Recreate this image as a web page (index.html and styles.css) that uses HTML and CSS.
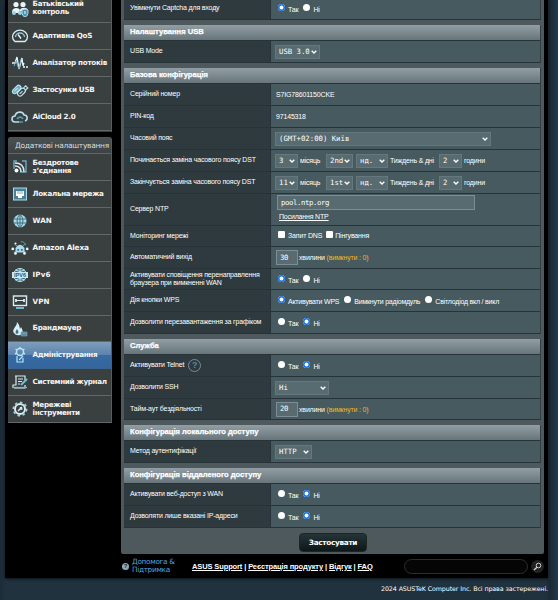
FILE: index.html
```
<!DOCTYPE html>
<html lang="uk">
<head>
<meta charset="utf-8">
<title>Адміністрування</title>
<link rel="stylesheet" href="styles.css">
</head>
<body>
<svg class="defs" width="0" height="0"><symbol id="chev" viewBox="0 0 6 4"><path d="M.7.7 3 3 5.300.7" fill="none" stroke="#fff" stroke-width="1.4"/></symbol></svg>
<div class="shell">
<div class="top">
<nav class="side">
<ul class="menu first">
<li><svg viewBox="0 0 18 16"><g fill="#e8f6fa"><circle cx="5" cy="3.500" r="2.600"/><circle cx="12" cy="3.500" r="2.600"/><path d="M1 11c0-5 7-5 8-2l-1 3H1zM9 9c1-3 7-3 8 0v1H9z"/></g><circle cx="3" cy="12" r="2" fill="#9bd3e4"/><circle cx="9" cy="12" r="2" fill="#9bd3e4"/><path d="M11 9l3-1 3 1v3q0 3-3 4-3-1-3-4z" fill="#4d8fae" stroke="#a8dced"/><path d="M14 10v3" stroke="#fff"/></svg><span>Батьківський контроль</span></li>
<li><svg viewBox="0 0 18 16" fill="none" stroke="#d8edf3" stroke-width="1.300"><path d="M4 13.500a7.500 6.500 0 1 1 10 0z"/><path d="M4.500 9a4.500 4 0 0 1 9 0" stroke="#8ecbdc"/><path d="M7 6.500l3 4" stroke="#fff"/></svg><span>Адаптивна QoS</span></li>
<li><svg viewBox="0 0 18 16" fill="none" stroke="#e8f6fa" stroke-width="1.300"><path d="M1 8h3l2-6 2 12 3-11 1 8 1-3"/><path d="M3 11l2-5 3 8 2-10" stroke="#70b9d0" stroke-width="1"/><path d="M12 12h2m1 0h2" /></svg><span>Аналізатор потоків</span></li>
<li><svg viewBox="0 0 18 16"><g transform="rotate(-45 9 8)" fill="none" stroke="#b9e4f0" stroke-width="1.200"><rect x="2" y="3" width="10" height="4.500" rx="2.200" fill="#68aac4"/><rect x="4" y="8" width="9" height="5" rx="2.500"/><path d="M13 9h3v3h-3M6 10.500h4M4 5h5"/></g></svg><span>Застосунки USB</span></li>
<li><svg viewBox="0 0 18 16" fill="none" stroke="#b9dfe9" stroke-width="1.600"><path d="M8 13H4a3 3 0 0 1 0-6c1-5 8-5 9-1 4 0 4 5 1 6"/><path d="M6 10c2-3 5-2 6 0M8 13h4" stroke="#5499b2"/></svg><span>AiCloud 2.0</span></li>
</ul>
<ul class="menu second">
<li class="title">Додаткові налаштування</li>
<li><svg viewBox="0 0 18 16" fill="none" stroke="#d8edf3" stroke-width="1.400"><path d="M3 10V2h3m5 0h4v11H9" stroke="#70aabd"/><path d="M4 4q9 0 9 9M4 7q6 0 6 6"/><circle cx="5.500" cy="11.500" r="2" fill="#fff" stroke="none"/></svg><span>Бездротове з’єднання</span></li>
<li><svg viewBox="0 0 18 16"><rect x="2.500" y="2" width="13" height="12" fill="#4a8199" stroke="#a8dced"/><path d="M5 5h8v5h-2v2H7v-2H5z" fill="#fff"/><path d="M7 5v3m2-3v3m2-3v3" stroke="#4a8199" stroke-width=".7"/></svg><span>Локальна мережа</span></li>
<li><svg viewBox="0 0 18 16"><circle cx="9" cy="8" r="6.500" fill="#a9d7e4"/><path d="M2 6h14M2 10h14M9 1v14M9 1Q3 8 9 15M9 1q6 7 0 14" fill="none" stroke="#39677a" stroke-width=".9"/></svg><span class="lat">WAN</span></li>
<li><svg viewBox="0 0 20 16"><path d="M4 4l3 2m9-3l-3 3M3 13l3-2m11 2l-3-2" stroke="#5aa6c2"/><path d="M5 13V8q5-7 10 0v5z" fill="#a9dced"/><path d="M7 9h2v2H7zm4 0h2v2h-2z" fill="#3e7186"/><g fill="#e8f6fa"><circle cx="2" cy="9" r="1.500"/><circle cx="18" cy="9" r="1.500"/><circle cx="5" cy="3" r="1.200"/><circle cx="5" cy="14" r="1.500"/><circle cx="15" cy="14" r="1.500"/></g><path d="M11 1q5 0 5 4" fill="none" stroke="#5aa6c2"/></svg><span class="lat alexa">Amazon Alexa</span></li>
<li><svg viewBox="0 0 18 16"><circle cx="9" cy="8" r="6.500" fill="#356a80" stroke="#b9e4f0"/><path d="M9 1v14M4 3q5 3 10 0M4 13q5-3 10 0" fill="none" stroke="#b9e4f0"/><rect x="1" y="5" width="16" height="6" fill="#c9e9f1"/><text x="9" y="10" text-anchor="middle" class="tiny">IPV6</text></svg><span class="lat">IPv6</span></li>
<li><svg viewBox="0 0 18 16" fill="none" stroke="#d8edf3" stroke-width="1.400"><rect x="2.500" y="2" width="13" height="9.500"/><path d="M5 6.500h8" stroke-width="1"/><path d="M5 5v3m8-3v3" stroke-width="1.800"/><path d="M5 14h8" stroke="#70b9d0" stroke-width="2"/></svg><span class="lat">VPN</span></li>
<li><svg viewBox="0 0 18 16"><path d="M6 1q0 3-2 5-3 4-1 6 2 3 6 2 4-2 2-6l-1-2-1 2Q9 4 6 1" fill="#d8f1f8"/><path d="M6 8q-3 4 0 5 3-1 0-5" fill="#3e7186"/><path d="M10 11h6v4h-6zM10 13h6m-3-2v2" fill="#538298" stroke="#83b3c5" stroke-width=".6"/></svg><span>Брандмауер</span></li>
<li class="on"><svg viewBox="0 0 18 16" fill="none" stroke="#b6e5fa" stroke-width="1.500"><circle cx="9" cy="5" r="3.500"/><path d="M9 0v2M4.500 2l1.500 1m6 0l1.500-1M4 7l2-1m6 0l2 1"/><path d="M6 9v6h6v-4M8 13l4-4" stroke-width="1.200"/></svg><span>Адміністрування</span></li>
<li><svg viewBox="0 0 18 16" fill="none" stroke="#d8edf3" stroke-width="1.200"><path d="M4 2h10v4m0 5v3H3M5 2v9H2v3"/><path d="M7 5h5M7 7.500h4M7 10h2"/><path d="M10 11l6-6" stroke="#79bdd3" stroke-width="2"/><path d="M2 13.500h14" stroke="#79bdd3"/></svg><span>Системний журнал</span></li>
<li><svg viewBox="0 0 18 16" fill="none" stroke="#d8edf3"><circle cx="9" cy="8" r="5" stroke-width="2"/><circle cx="9" cy="8" r="6.700" stroke-width="1.500" stroke-dasharray="2.600 2.600" stroke="#9fd5e5"/><path d="M7 10l4-4M9.500 6v2h2" stroke-width="1.400"/></svg><span>Мережеві інструменти</span></li>
</ul>
</nav>
<main class="panel">
<section class="head-cut"><div class="row"><label>Увімкнути Captcha для входу</label><div class="val"><i class="radio on"></i><b>Так</b><i class="radio"></i><b>Ні</b></div></div></section>
<section><h2>Налаштування USB</h2>
<div class="row"><label>USB Mode</label><div class="val"><span class="sel s45">USB 3.0<svg><use href="#chev"/></svg></span></div></div></section>
<section><h2>Базова конфігурація</h2>
<div class="row"><label>Серійний номер</label><div class="val serial">S7IG78601150CKE</div></div>
<div class="row"><label>PIN-код</label><div class="val serial">97145318</div></div>
<div class="row"><label>Часовий пояс</label><div class="val"><span class="sel s216">(GMT+02:00) Київ<svg><use href="#chev"/></svg></span></div></div>
<div class="row"><label>Починається заміна часового поясу DST</label><div class="val dst"><span class="sel s23">3<svg><use href="#chev"/></svg></span><em class="m">місяць</em><span class="sel s27">2nd<svg><use href="#chev"/></svg></span><span class="sel s32">нд.<svg><use href="#chev"/></svg></span><em class="d">Тиждень &amp; дні</em><span class="sel s23">2<svg><use href="#chev"/></svg></span><em>години</em></div></div>
<div class="row"><label>Закінчується заміна часового поясу DST</label><div class="val dst"><span class="sel s23">11<svg><use href="#chev"/></svg></span><em class="m">місяць</em><span class="sel s27">1st<svg><use href="#chev"/></svg></span><span class="sel s32">нд.<svg><use href="#chev"/></svg></span><em class="d">Тиждень &amp; дні</em><span class="sel s23">2<svg><use href="#chev"/></svg></span><em>години</em></div></div>
<div class="row tall"><label>Сервер NTP</label><div class="val ntp"><span class="inp wide">pool.ntp.org</span><a>Посилання NTP</a></div></div>
<div class="row h21"><label>Моніторинг мережі</label><div class="val"><i class="check"></i><b class="dns">Запит DNS</b><i class="check c2"></i><b>Пінгування</b></div></div>
<div class="row"><label>Автоматичний вихід</label><div class="val"><span class="inp">30</span><em class="mn">хвилини <q>(вимкнути : 0)</q></em></div></div>
<div class="row h21"><label>Активувати сповіщення перенаправлення<br>браузера при вимкненні WAN</label><div class="val"><i class="radio on"></i><b>Так</b><i class="radio"></i><b>Ні</b></div></div>
<div class="row"><label>Дія кнопки WPS</label><div class="val wps"><i class="radio on"></i><b>Активувати WPS</b><i class="radio"></i><b>Вимкнути радіомдуль</b><i class="radio"></i><b>Світлодіод вкл / викл</b></div></div>
<div class="row"><label>Дозволити перезавантаження за графіком</label><div class="val"><i class="radio"></i><b>Так</b><i class="radio on"></i><b>Ні</b></div></div></section>
<section><h2>Служба</h2>
<div class="row"><label>Активувати Telnet <span class="help">?</span></label><div class="val"><i class="radio"></i><b>Так</b><i class="radio on"></i><b>Ні</b></div></div>
<div class="row"><label>Дозволити SSH</label><div class="val"><span class="sel s54">Ні<svg><use href="#chev"/></svg></span></div></div>
<div class="row h21"><label>Тайм-аут бездіяльності</label><div class="val"><span class="inp">20</span><em class="mn">хвилини <q>(вимкнути : 0)</q></em></div></div></section>
<section><h2>Конфігурація локального доступу</h2>
<div class="row"><label>Метод аутентифікації</label><div class="val"><span class="sel s37">HTTP<svg><use href="#chev"/></svg></span></div></div></section>
<section><h2>Конфігурація віддаленого доступу</h2>
<div class="row"><label>Активувати веб-доступ з WAN</label><div class="val"><i class="radio"></i><b>Так</b><i class="radio on"></i><b>Ні</b></div></div>
<div class="row"><label>Дозволяти лише вказані IP-адреси</label><div class="val"><i class="radio"></i><b>Так</b><i class="radio on"></i><b>Ні</b></div></div></section>
<button>Застосувати</button>
</main>
</div>
<footer>
<span class="q">?</span><span class="support">Допомога &amp; Підтримка</span>
<div class="links"><a>ASUS Support</a> | <a>Реєстрація продукту</a> | <a>Відгук</a> | <a>FAQ</a></div>
<span class="search"></span><span class="go"><svg width="9" height="9" viewBox="0 0 9 9" fill="none" stroke="#d0d0d0"><circle cx="5.500" cy="3.500" r="2.300"/><path d="M4 5.200L1 8" stroke-width="1.400"/></svg></span>
</footer>
</div>
<p class="copy">2024 ASUSTeK Computer Inc. Всі права застережені.</p>
</body>
</html>
```
FILE: styles.css
```
* { box-sizing: border-box; }
body { margin: 0; width: 558px; height: 600px; overflow: hidden; background: linear-gradient(90deg, #1c2c37, #21323f 6px, #21323f 545px, #1b2a35 550px, #22384a 558px); font-family: "Liberation Sans", sans-serif; color: #fff; }
.defs { display: block; height: 0; }
.shell { margin-left: 5px; width: 543px; height: 578px; background: #000; box-shadow: 0 1px 3px #0a1218; }
.top { display: flex; height: 554px; }
.side { width: 104px; margin: 0 9px 0 3px; }
.menu { list-style: none; margin: 0; padding: 0; background: #3a3f3f; border-right: 1px solid #555c5c; display: flow-root; }
.menu li { height: 27px; display: flex; align-items: center; border-bottom: 1px solid #606868; font: bold 7.200px/8px "DejaVu Sans", sans-serif; letter-spacing: -.3px; color: #f4f4f4; padding-left: 3px; }
.menu li svg { width: 18px; height: 16px; flex: none; margin-right: 3.500px; }
.menu li span { width: 78px; padding-bottom: 1px; white-space: nowrap; }
.menu li .lat { letter-spacing: .1px; }
.menu li .alexa { letter-spacing: -.2px; font-size: 7.400px; }
.menu li:first-child:not(.title) span, .second li:nth-child(2) span, .second li:last-child span { white-space: normal; width: 60px; }
.menu .title { height: 17px; padding-left: 7px; font: 7.500px/9px "DejaVu Sans", sans-serif; letter-spacing: -.3px; color: #dcdcdc; background: linear-gradient(#4c5354, #3c4243); border-radius: 3px 3px 0 0; white-space: nowrap; }
.first { height: 132px; }
.first li:first-child { height: 28px; margin-top: -5px; }
.second { margin-top: 5px; border-radius: 3px 3px 0 0; }
.menu li.on { background: linear-gradient(#7f9dbb, #5c84ae 48%, #386aa3 52%, #34659c); border-bottom-color: #3a6490; }
.second li:nth-child(8) { height: 26px; }
.tiny { font: bold 5.500px "Liberation Sans", sans-serif; fill: #2b5b70; letter-spacing: 0; }
.panel { width: 423px; height: 554px; background: #4d595d; padding: 0 3px; border-radius: 0 0 2px 2px; display: flex; flex-direction: column; overflow: hidden; }
section { margin-bottom: 5px; border-right: 1px solid #303d42; flex: none; }
.head-cut { margin-top: -2px; }
h2 { margin: 0; height: 15px; padding-left: 6px; font: bold 7.600px/14px "Liberation Sans", sans-serif; -webkit-text-stroke: .25px #fff; background: linear-gradient(#929ea3, #67757b); }
.row { height: 22px; display: flex; border-bottom: 1px solid #26343a; }
h2 + .row { height: 23px; border-top: 1px solid #26343a; }
.h21 { height: 21px; }
.tall { height: 32px; }
label { width: 147px; background: #2f3a3e; border-right: 1px solid #26343a; padding-left: 6px; font-size: 7px; letter-spacing: -.17px; line-height: 8.500px; display: flex; align-items: center; flex: none; white-space: nowrap; }
.val { flex: 1; background: #475a5f; display: flex; align-items: center; padding-left: 4px; font-size: 7px; letter-spacing: -.17px; line-height: 9px; white-space: nowrap; }
.serial { padding-left: 5px; }
.val b, .val em { font-weight: normal; font-style: normal; }
.val b { margin-top: 2px; }
.wps { letter-spacing: -.22px; }
.radio { width: 7px; height: 7px; border-radius: 50%; background: #fff; margin: -2px 3px 0 5px; flex: none; }
.radio:first-child { margin-left: 3px; }
.radio.on { box-shadow: inset 0 0 0 1.500px #0f73e6; }
.sel, .inp { height: 14px; background: #576b71; border: 1px solid #64787e; font: 7.300px/12px "DejaVu Sans Mono", monospace; letter-spacing: 0; color: #fff; padding-left: 3px; display: flex; align-items: center; justify-content: space-between; flex: none; }
.sel svg { width: 6px; height: 4px; margin-right: 2px; }
.s45 { width: 45px; } .s216 { width: 216px; } .s23 { width: 23px; } .s27 { width: 27px; } .s32 { width: 32px; } .s54 { width: 54px; } .s37 { width: 37px; }
.dst em { padding-left: 2px; }
.dst .m { width: 28px; }
.dst .s27 { margin-right: 3px; }
.dst .d { width: 51px; }
.inp { width: 22px; margin-left: 1px; height: 15px; border-color: #7c8e93; letter-spacing: -.4px; }
.inp.wide { width: 198px; margin-left: 2px; }
.mn { padding-left: 1px; }
q { quotes: none; color: #eeb81c; }
.ntp { flex-direction: column; align-items: flex-start; padding-top: 1px; }
.ntp a { text-decoration: underline; margin: 2px 0 0 4px; }
.check { width: 7px; height: 7px; background: #fff; border-radius: 1px; margin: -3px 3px 0 3px; flex: none; }
.val .check + b { margin-top: -2px; }
.c2 { margin-left: 4px; margin-right: 2px; }
.help { width: 13px; height: 13px; border: 1px solid #6d8fa8; border-radius: 50%; color: #5d84a4; font: bold 9px/11px "Liberation Sans", sans-serif; text-align: center; margin-left: 4px; }
button { width: 68px; height: 19px; flex: none; margin: 0 0 0 175px; border: 1px solid #1b2629; border-radius: 4px; background: linear-gradient(#253437, #0d1718); color: #fff; font: bold 7.300px/14px "DejaVu Sans", sans-serif; letter-spacing: -.3px; padding: 0; }
footer { height: 24px; display: flex; align-items: center; padding-left: 117px; }
.q { width: 7px; height: 7px; border-radius: 50%; background: #8fa9b3; color: #101c22; font: bold 6px/7px "Liberation Sans", sans-serif; text-align: center; margin-right: 3px; }
.support { width: 60px; padding-right: 12px; font: 7.300px/8.500px "DejaVu Sans", sans-serif; letter-spacing: -.3px; color: #56a4dc; }
.links { font-weight: bold; font-size: 7.500px; letter-spacing: -.12px; width: 212px; white-space: nowrap; }
.links a { text-decoration: underline; }
.search { width: 124px; height: 15px; border: 1px solid #2e2e2e; border-radius: 8px; background: #050505; }
.go { width: 13px; height: 13px; margin-left: 3px; border-radius: 50%; background: #222; display: flex; align-items: center; justify-content: center; }
.copy { margin: 6px 10px 0 0; text-align: right; font: 6.300px/9px "DejaVu Sans", sans-serif; letter-spacing: -.08px; }
```
